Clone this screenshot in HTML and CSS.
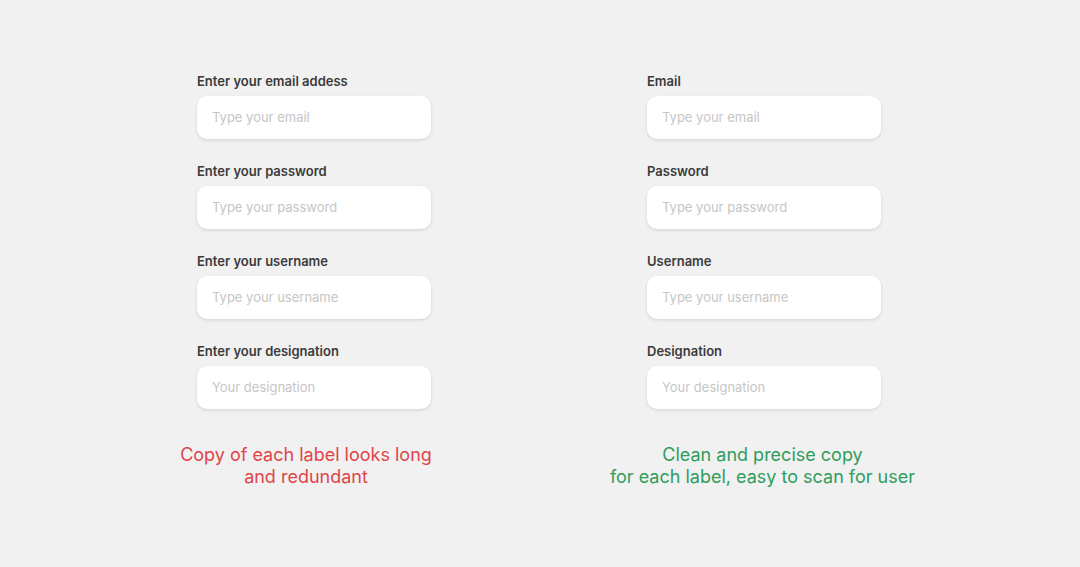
FILE: index.html
```html
<!DOCTYPE html>
<html>
<head>
<meta charset="utf-8">
<link rel="stylesheet" href="styles.css">
</head>
<body>
<main class="page">
  <section class="col col-left">
    <div class="field"><label class="label">Enter your email addess</label><div class="input">Type your email</div></div>
    <div class="field"><label class="label">Enter your password</label><div class="input">Type your password</div></div>
    <div class="field"><label class="label">Enter your username</label><div class="input">Type your username</div></div>
    <div class="field"><label class="label">Enter your designation</label><div class="input">Your designation</div></div>
    <p class="caption caption-bad">Copy of each label looks long<br>and redundant</p>
  </section>
  <section class="col col-right">
    <div class="field"><label class="label">Email</label><div class="input">Type your email</div></div>
    <div class="field"><label class="label">Password</label><div class="input">Type your password</div></div>
    <div class="field"><label class="label">Username</label><div class="input">Type your username</div></div>
    <div class="field"><label class="label">Designation</label><div class="input">Your designation</div></div>
    <p class="caption caption-good">Clean and precise copy<br>for each label, easy to scan for user</p>
  </section>
</main>
</body>
</html>
```
FILE: styles.css
```css
html, body {
  margin: 0;
  padding: 0;
  background: #f1f1f1;
  font-family: Inter, "Liberation Sans", sans-serif;
}
.page {
  width: 1080px;
  height: 567px;
  display: flex;
  padding: 73px 0 0 197px;
  box-sizing: border-box;
  gap: 216px;
}
.col {
  width: 234px;
  display: flex;
  flex-direction: column;
}
.field {
  display: flex;
  flex-direction: column;
  margin-bottom: 24px;
}
.label {
  font-size: 13px;
  font-weight: 600;
  color: #3b3b3b;
  line-height: 16px;
  height: 16px;
  margin-bottom: 7px;
}
.input {
  height: 43px;
  background: #fff;
  border-radius: 10px;
  box-shadow: 0 1px 3px rgba(0,0,0,0.09), 0 2px 5px rgba(0,0,0,0.04);
  display: flex;
  align-items: center;
  padding-left: 15px;
  padding-bottom: 1px;
  font-size: 13px;
  color: #c6c6c6;
  box-sizing: border-box;
}
.caption {
  margin: 11px 0 0;
  font-size: 18px;
  line-height: 22px;
  text-align: center;
}
.caption-bad {
  color: #e0444a;
  width: 290px;
  margin-left: -36px;
}
.caption-good {
  color: #2f9d5c;
  width: 343px;
  margin-left: -56px;
}
```
